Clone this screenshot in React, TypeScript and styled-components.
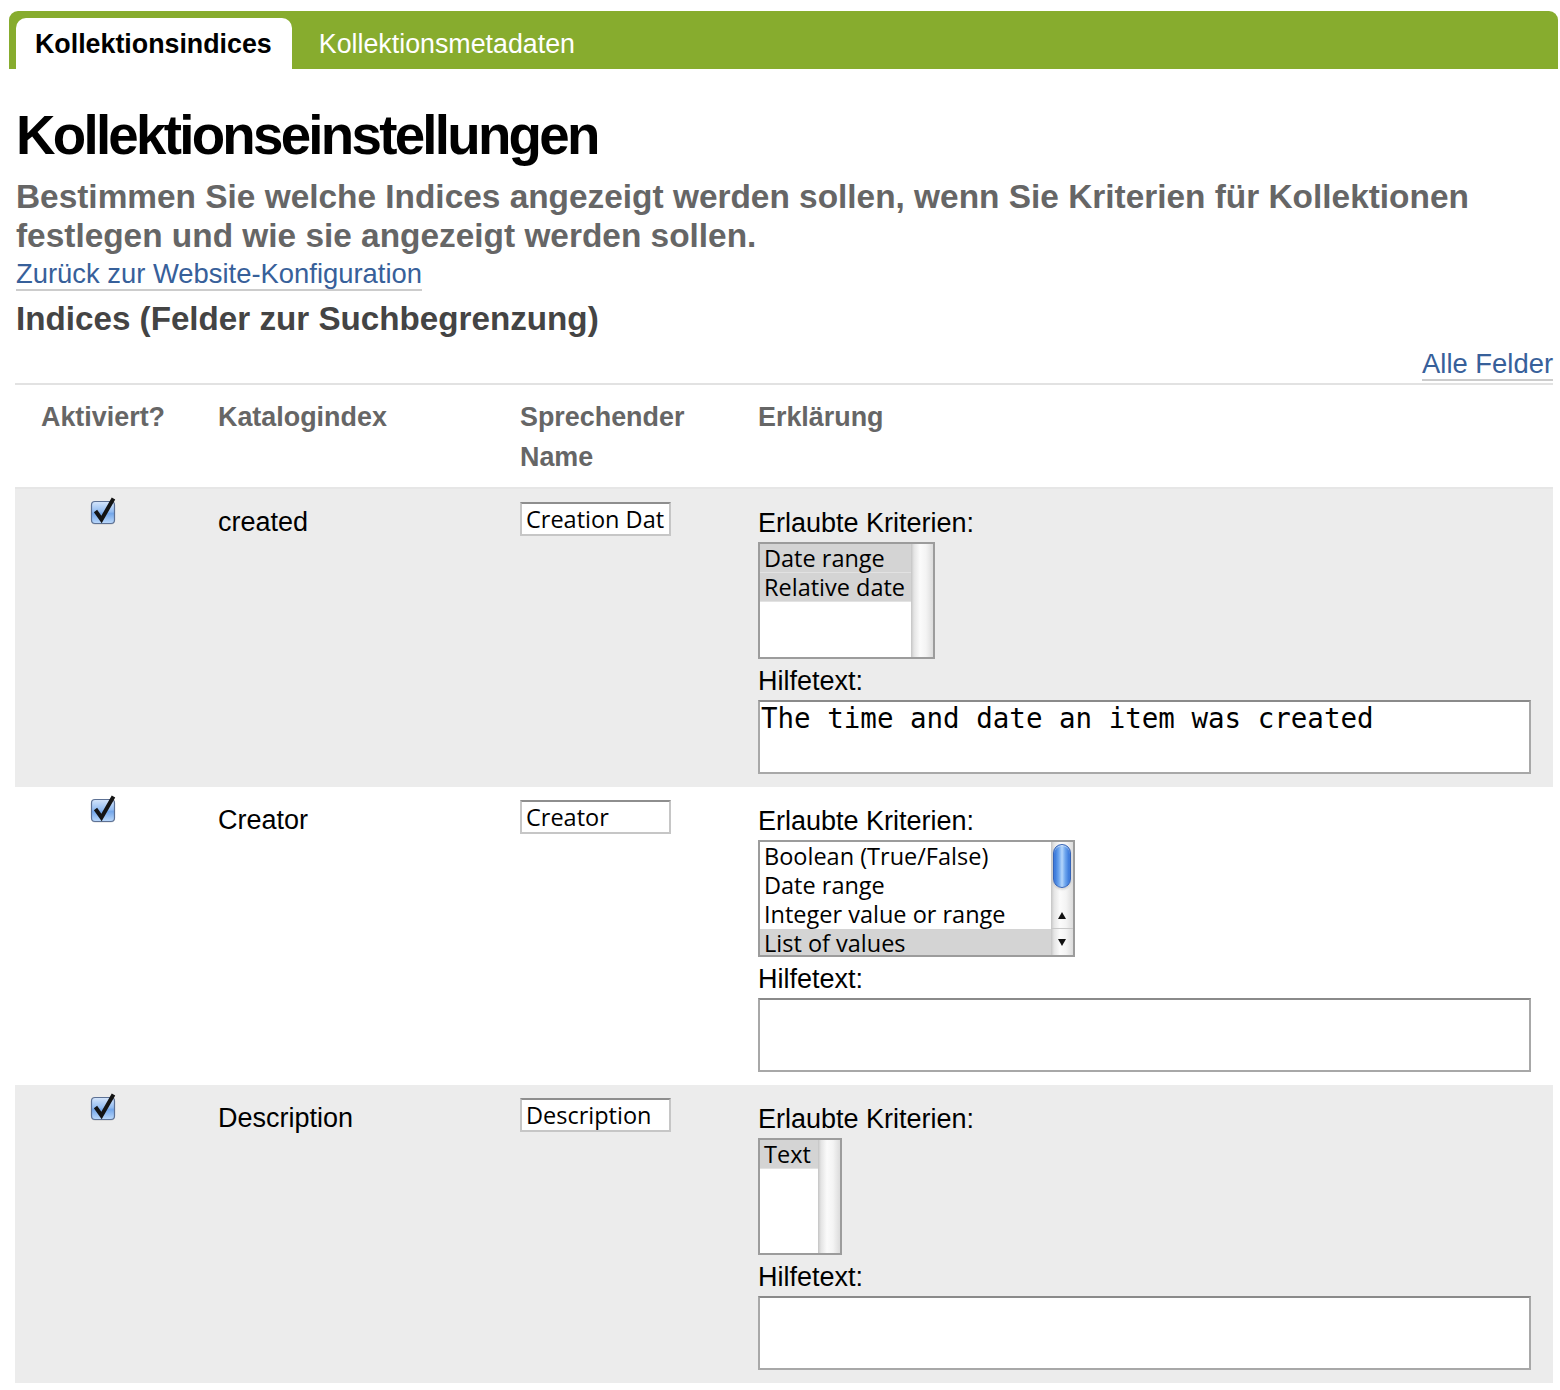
import React from "react";
import styled, { createGlobalStyle } from "styled-components";

const GlobalStyle = createGlobalStyle`
  html, body { margin: 0; padding: 0; background: #fff; }
  body { font-family: "Liberation Sans", Arial, Helvetica, sans-serif; color: #000; }
  * { box-sizing: border-box; }
`;

const Page = styled.div`
  width: 1560px;
  padding: 11px 0 8px 0;
`;

const TabBar = styled.nav`
  margin: 0 2px 0 9px;
  height: 58px;
  background: #87ac2e;
  border-radius: 9px 9px 0 0;
  padding: 7px 0 0 7px;
  display: flex;
  align-items: flex-end;
`;

const TabList = styled.div`
  display: flex;
  gap: 8px;
`;

const Tab = styled.a<{ $active?: boolean }>`
  display: block;
  height: 51px;
  line-height: 52px;
  padding: 0 20px 0 19px;
  font-size: 26.8px;
  font-weight: ${(p) => (p.$active ? 700 : 400)};
  color: ${(p) => (p.$active ? "#000" : "#fff")};
  background: ${(p) => (p.$active ? "#fff" : "transparent")};
  border-radius: 10px 10px 0 0;
  text-decoration: none;
  white-space: nowrap;
`;

const Content = styled.main`
  padding: 0 7px 0 15px;
`;

const Title = styled.h1`
  margin: 34px 0 0 1px;
  font-size: 54.7px;
  line-height: 65px;
  letter-spacing: -0.05em;
  font-weight: 700;
  color: #000;
`;

const Lead = styled.p`
  margin: 9px 0 0 1px;
  font-size: 33.4px;
  line-height: 39px;
  font-weight: 700;
  color: #666;
`;

const LinkLine = styled.div<{ $right?: boolean }>`
  text-align: ${(p) => (p.$right ? "right" : "left")};
  margin: ${(p) => (p.$right ? "10px 0 0 0" : "4px 0 0 1px")};
`;

const TextLink = styled.a`
  display: inline-block;
  font-size: 27.4px;
  line-height: 30px;
  color: #37609a;
  text-decoration: none;
  border-bottom: 2px solid #cccccc;
`;

const SectionTitle = styled.h2`
  margin: 8px 0 0 1px;
  font-size: 33.2px;
  line-height: 40px;
  font-weight: 700;
  color: #444;
`;

const Table = styled.section`
  margin-top: 2px;
  border-top: 2px solid #e2e2e2;
`;

const Grid = styled.div<{ $shaded?: boolean }>`
  display: grid;
  grid-template-columns: 203px 302px 238px 1fr;
  background: ${(p) => (p.$shaded ? "#ececec" : "#fff")};
`;

const HeaderRow = styled(Grid)`
  padding: 12px 0 10px 0;
  border-bottom: 2px solid #e6e6e6;
`;

const HeadCell = styled.div<{ $check?: boolean }>`
  font-size: 26.9px;
  line-height: 40px;
  font-weight: 700;
  color: #666;
  padding-right: ${(p) => (p.$check ? "0" : "30px")};
  ${(p) =>
    p.$check
      ? `margin-left: 25px; width: 126px; text-align: center;`
      : ""}
`;

const CheckCell = styled.div`
  padding: 8px 0 0 25px;
  width: 151px;
  display: flex;
  justify-content: center;
  align-items: flex-start;
`;

const NameCell = styled.div`
  padding-top: 14px;
  font-size: 27px;
  line-height: 38px;
`;

const InputCell = styled.div`
  padding-top: 13px;
`;

const TitleInput = styled.input`
  display: block;
  width: 151px;
  height: 34px;
  border: 2px solid #c6c6c6;
  border-top-color: #8e8e8e;
  padding: 0 4px;
  font-family: "Open Sans", "DejaVu Sans", sans-serif;
  font-size: 23.5px;
  color: #000;
  background: #fff;
  outline: none;
`;

const ExplainCell = styled.div`
  padding: 15px 22px 13px 0;
  display: flex;
  flex-direction: column;
  align-items: flex-start;
`;

const FieldLabel = styled.label<{ $tight?: boolean }>`
  display: block;
  font-size: 27px;
  line-height: ${(p) => (p.$tight ? "37px" : "38px")};
  color: #000;
`;

const ListBox = styled.div<{ $w: number }>`
  width: ${(p) => p.$w}px;
  height: 117px;
  border: 2px solid #9c9c9c;
  background: #fff;
  display: flex;
  margin-bottom: 4px;
  overflow: hidden;
`;

const OptionList = styled.div`
  flex: 1;
  min-width: 0;
  overflow: hidden;
`;

const Option = styled.div<{ $selected?: boolean }>`
  font-family: "Open Sans", "DejaVu Sans", sans-serif;
  font-size: 23.5px;
  line-height: 29px;
  padding-left: 4px;
  white-space: nowrap;
  color: #000;
  background: ${(p) => (p.$selected ? "#d4d4d4" : "transparent")};
  box-shadow: ${(p) => (p.$selected ? "inset 0 -1px 0 #e2e2e2" : "none")};
`;

const trackBg = `linear-gradient(to right, #c4c4c4 0px, #e4e4e4 3px, #fbfbfb 9px, #f4f4f4 15px, #dcdcdc 22px)`;

const ScrollTrack = styled.div`
  width: 22px;
  flex: none;
  background: ${trackBg};
  display: flex;
  flex-direction: column;
`;

const Thumb = styled.div`
  margin: 2px 2px 0 2px;
  height: 44px;
  border-radius: 9px;
  border: 1px solid #3564b8;
  background: linear-gradient(to right, #2f6fd6 0%, #6ea6ee 30%, #b4d6fb 50%, #6ea6ee 70%, #2f6fd6 100%);
  box-shadow: inset 0 1px 1px rgba(255, 255, 255, 0.6), 0 2px 2px rgba(0, 0, 0, 0.12);
`;

const TrackFill = styled.div`
  flex: 1;
`;

const ArrowBtn = styled.div<{ $down?: boolean }>`
  height: 27px;
  display: flex;
  align-items: center;
  justify-content: center;
  border-top: 1px solid ${(p) => (p.$down ? "#c8c8c8" : "transparent")};
`;

function Arrow({ down }: { down?: boolean }) {
  return (
    <svg width="8" height="7" viewBox="0 0 8 7" aria-hidden="true">
      <path d={down ? "M0 0 L8 0 L4 7 Z" : "M4 0 L8 7 L0 7 Z"} fill="#111" />
    </svg>
  );
}

const HelpArea = styled.textarea`
  display: block;
  width: 100%;
  height: 74px;
  border: 2px solid #a8a8a8;
  border-top-color: #8a8a8a;
  padding: 0 1px;
  margin: 0;
  font-family: "DejaVu Sans Mono", "Liberation Mono", monospace;
  font-size: 27.5px;
  line-height: 33px;
  color: #000;
  background: #fff;
  resize: none;
  overflow: hidden;
  outline: none;
`;

function AquaCheck() {
  return (
    <svg width="27" height="29" viewBox="0 0 27 29" aria-hidden="true">
      <defs>
        <linearGradient id="cbfill" x1="0" y1="0" x2="0" y2="1">
          <stop offset="0" stopColor="#d6e6fb" />
          <stop offset="0.45" stopColor="#94bdf1" />
          <stop offset="0.55" stopColor="#74a7ea" />
          <stop offset="1" stopColor="#bcd9fb" />
        </linearGradient>
      </defs>
      <rect x="1.5" y="5.5" width="23" height="22" rx="3.5" fill="rgba(0,0,0,0.15)" />
      <rect x="1.5" y="4.5" width="23" height="22" rx="3.5" fill="url(#cbfill)" stroke="#5d7194" strokeWidth="1.2" />
      <path d="M5.5 14 L11.5 22.5 L23.5 1.5" fill="none" stroke="#141414" strokeWidth="4" strokeLinejoin="miter" />
    </svg>
  );
}

type Opt = { text: string; selected?: boolean };
type IndexRow = {
  name: string;
  title: string;
  boxWidth: number;
  options: Opt[];
  help: string;
  aqua?: boolean;
};

const rows: IndexRow[] = [
  {
    name: "created",
    title: "Creation Date",
    boxWidth: 177,
    options: [
      { text: "Date range", selected: true },
      { text: "Relative date", selected: true },
    ],
    help: "The time and date an item was created",
  },
  {
    name: "Creator",
    title: "Creator",
    boxWidth: 317,
    options: [
      { text: "Boolean (True/False)" },
      { text: "Date range" },
      { text: "Integer value or range" },
      { text: "List of values", selected: true },
    ],
    help: "",
    aqua: true,
  },
  {
    name: "Description",
    title: "Description",
    boxWidth: 84,
    options: [{ text: "Text", selected: true }],
    help: "",
  },
];

function Criteria({ row }: { row: IndexRow }) {
  return (
    <ListBox $w={row.boxWidth} role="listbox" aria-multiselectable="true">
      <OptionList>
        {row.options.map((o) => (
          <Option key={o.text} $selected={o.selected} role="option" aria-selected={!!o.selected}>
            {o.text}
          </Option>
        ))}
      </OptionList>
      <ScrollTrack>
        {row.aqua ? (
          <>
            <Thumb />
            <TrackFill />
            <ArrowBtn>
              <Arrow />
            </ArrowBtn>
            <ArrowBtn $down>
              <Arrow down />
            </ArrowBtn>
          </>
        ) : null}
      </ScrollTrack>
    </ListBox>
  );
}

export default function App() {
  return (
    <Page>
      <GlobalStyle />
      <TabBar>
        <TabList>
          <Tab $active href="#">Kollektionsindices</Tab>
          <Tab href="#">Kollektionsmetadaten</Tab>
        </TabList>
      </TabBar>
      <Content>
        <Title>Kollektionseinstellungen</Title>
        <Lead>
          Bestimmen Sie welche Indices angezeigt werden sollen, wenn Sie Kriterien für Kollektionen
          festlegen und wie sie angezeigt werden sollen.
        </Lead>
        <LinkLine>
          <TextLink href="#">Zurück zur Website-Konfiguration</TextLink>
        </LinkLine>
        <SectionTitle>Indices (Felder zur Suchbegrenzung)</SectionTitle>
        <LinkLine $right>
          <TextLink href="#">Alle Felder</TextLink>
        </LinkLine>
        <Table>
          <HeaderRow>
            <HeadCell $check>Aktiviert?</HeadCell>
            <HeadCell>Katalogindex</HeadCell>
            <HeadCell>Sprechender Name</HeadCell>
            <HeadCell>Erklärung</HeadCell>
          </HeaderRow>
          {rows.map((r, i) => (
            <Grid key={r.name} $shaded={i % 2 === 0}>
              <CheckCell>
                <AquaCheck />
              </CheckCell>
              <NameCell>{r.name}</NameCell>
              <InputCell>
                <TitleInput readOnly defaultValue={r.title} />
              </InputCell>
              <ExplainCell>
                <FieldLabel>Erlaubte Kriterien:</FieldLabel>
                <Criteria row={r} />
                <FieldLabel $tight>Hilfetext:</FieldLabel>
                <HelpArea readOnly defaultValue={r.help} />
              </ExplainCell>
            </Grid>
          ))}
        </Table>
      </Content>
    </Page>
  );
}
